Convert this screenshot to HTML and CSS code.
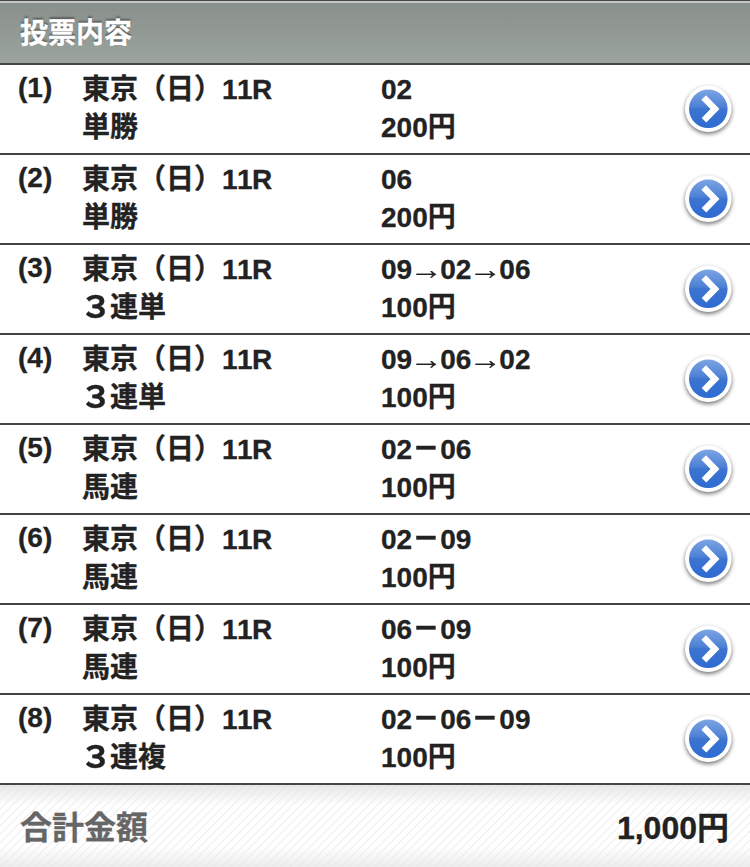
FILE: index.html
```html
<!DOCTYPE html>
<html lang="ja">
<head>
  <meta charset="UTF-8">
  <meta name="viewport" content="width=device-width, initial-scale=1.0">
  <title>投票内容</title>
  <link rel="stylesheet" href="styles.css">
</head>
<body>
  <h1 class="header">投票内容</h1>

  <svg class="defs" width="0" height="0">
    <defs>
      <linearGradient id="blue" x1="0" y1="0" x2="0" y2="1">
        <stop offset="0" stop-color="#7da5e4"/>
        <stop offset="0.45" stop-color="#4d80d5"/>
        <stop offset="0.5" stop-color="#3d74d0"/>
        <stop offset="1" stop-color="#2d6bd3"/>
      </linearGradient>
      <symbol id="arrow" viewBox="0 0 48 48">
        <circle cx="24.3" cy="23.8" r="23.3" fill="#fff"/>
        <circle cx="24.3" cy="23.8" r="19.3" fill="url(#blue)"/>
        <path d="M19.7 12.5L31 24L20 35.3" fill="none" stroke="#fff" stroke-width="6.4"/>
      </symbol>
    </defs>
  </svg>

  <ul class="bets">
    <li class="bet">
      <div class="num">(1)</div>
      <div class="race">東京（日）<span class="r">11R</span><br>単勝</div>
      <div class="pick">02<br>200円</div>
      <svg class="btn"><use href="#arrow"/></svg>
    </li>
    <li class="bet">
      <div class="num">(2)</div>
      <div class="race">東京（日）<span class="r">11R</span><br>単勝</div>
      <div class="pick">06<br>200円</div>
      <svg class="btn"><use href="#arrow"/></svg>
    </li>
    <li class="bet">
      <div class="num">(3)</div>
      <div class="race">東京（日）<span class="r">11R</span><br><span class="wide">３</span>連単</div>
      <div class="pick">09<span class="to">→</span>02<span class="to">→</span>06<br>100円</div>
      <svg class="btn"><use href="#arrow"/></svg>
    </li>
    <li class="bet">
      <div class="num">(4)</div>
      <div class="race">東京（日）<span class="r">11R</span><br><span class="wide">３</span>連単</div>
      <div class="pick">09<span class="to">→</span>06<span class="to">→</span>02<br>100円</div>
      <svg class="btn"><use href="#arrow"/></svg>
    </li>
    <li class="bet">
      <div class="num">(5)</div>
      <div class="race">東京（日）<span class="r">11R</span><br>馬連</div>
      <div class="pick">02<span class="dash">－</span>06<br>100円</div>
      <svg class="btn"><use href="#arrow"/></svg>
    </li>
    <li class="bet">
      <div class="num">(6)</div>
      <div class="race">東京（日）<span class="r">11R</span><br>馬連</div>
      <div class="pick">02<span class="dash">－</span>09<br>100円</div>
      <svg class="btn"><use href="#arrow"/></svg>
    </li>
    <li class="bet">
      <div class="num">(7)</div>
      <div class="race">東京（日）<span class="r">11R</span><br>馬連</div>
      <div class="pick">06<span class="dash">－</span>09<br>100円</div>
      <svg class="btn"><use href="#arrow"/></svg>
    </li>
    <li class="bet">
      <div class="num">(8)</div>
      <div class="race">東京（日）<span class="r">11R</span><br><span class="wide">３</span>連複</div>
      <div class="pick">02<span class="dash">－</span>06<span class="dash">－</span>09<br>100円</div>
      <svg class="btn"><use href="#arrow"/></svg>
    </li>
  </ul>

  <div class="total">
    <div class="total-label">合計金額</div>
    <div class="total-price">1,000円</div>
  </div>
</body>
</html>
```
FILE: styles.css
```css
* {
  box-sizing: border-box;
}

body {
  margin: 0;
  background: #fff;
  color: #222;
  font-family: "Liberation Sans", "Noto Sans CJK JP", sans-serif;
  font-size: 28px;
  font-weight: bold;
  line-height: 38px;
  font-kerning: none;
  -webkit-text-stroke: 0.3px;
}

.header {
  height: 65px;
  margin: 0;
  padding: 12px 20px 0;
  border-top: 1px solid #444645;
  border-bottom: 2px solid #444645;
  background: linear-gradient(#898f8b, #9ba49f);
  box-shadow: inset 0 2px 0 #c4c7c5;
  color: #fff;
  font-size: 28px;
  line-height: 42px;
  text-shadow: 0 -2px 2px rgba(0, 0, 0, 0.4);
}

.defs {
  display: block;
}

.bets {
  margin: 0;
  padding: 0;
  list-style: none;
}

.bet {
  display: flex;
  height: 90px;
  padding: 6px 18px 0;
  border-bottom: 2px solid #444;
}

.num {
  width: 64px;
  margin-top: -2px;
}

.race {
  width: 299px;
}

.r {
  letter-spacing: -0.6px;
}

.pick {
  flex: 1;
}

.wide {
  display: inline-block;
  line-height: 1;
  transform: scale(1.18, 1.08);
}

.to {
  display: inline-block;
  font-family: "Liberation Serif", serif;
  font-weight: normal;
  line-height: 1;
  transform: scaleX(1.18);
}

.dash {
  display: inline-block;
  line-height: 1;
  transform: scale(0.96, 1.25);
}

.btn {
  width: 48px;
  height: 48px;
  margin-top: 14px;
  overflow: visible;
  filter: drop-shadow(0 2px 2px rgba(0, 0, 0, 0.55));
}

.total {
  display: flex;
  justify-content: space-between;
  height: 82px;
  padding: 0 21px 0 20px;
  background:
    linear-gradient(rgba(225, 225, 225, 0.8), rgba(255, 255, 255, 0) 25%, rgba(255, 255, 255, 0) 75%, rgba(232, 232, 232, 0.8)),
    repeating-linear-gradient(135deg, #fff 0, #fff 4px, #eee 5px, #fff 6px);
  font-size: 32px;
  line-height: 86px;
}

.total-label {
  color: #666;
}
```
